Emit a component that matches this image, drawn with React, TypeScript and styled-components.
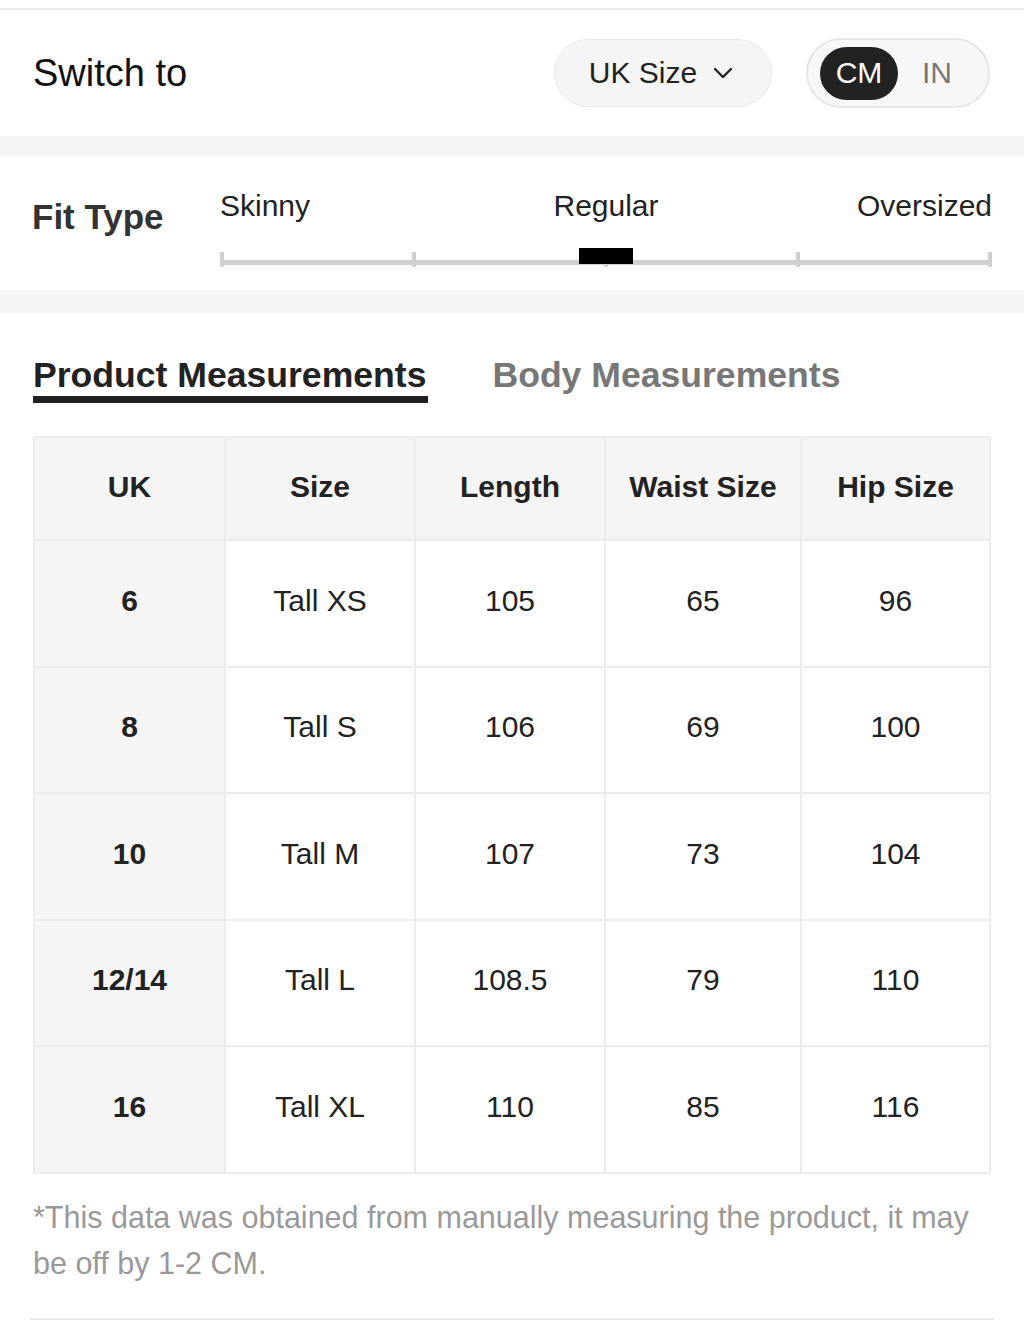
import React from "react";
import styled, { createGlobalStyle } from "styled-components";

const GlobalStyle = createGlobalStyle`
  html, body { margin: 0; padding: 0; background: #ffffff; }
  body {
    font-family: "Liberation Sans", Arial, Helvetica, sans-serif;
    color: #222;
    -webkit-font-smoothing: antialiased;
  }
  * { box-sizing: border-box; }
`;

const Page = styled.div`
  width: 1024px;
  padding-top: 8px;
`;

const TopRule = styled.div`
  height: 2px;
  background: #ececec;
`;

const SwitchRow = styled.div`
  height: 126px;
  display: flex;
  align-items: center;
  justify-content: space-between;
  padding: 0 34px 0 33px;
`;

const SwitchTitle = styled.div`
  font-size: 38px;
  color: #111;
`;

const Controls = styled.div`
  display: flex;
  align-items: center;
  gap: 34px;
`;

const SelectPill = styled.div`
  width: 218px;
  height: 68px;
  border-radius: 34px;
  background: #f5f5f5;
  border: 1px solid #e9e9e9;
  display: flex;
  align-items: center;
  justify-content: center;
  gap: 16px;
  font-size: 30px;
  color: #222;
  padding-right: 4px;
`;

const UnitToggle = styled.div`
  width: 184px;
  height: 70px;
  border-radius: 35px;
  background: #f7f7f7;
  border: 2px solid #e6e6e6;
  display: flex;
  align-items: center;
  padding: 0 12px;
`;

const UnitOption = styled.div<{ $active?: boolean }>`
  height: 53px;
  width: ${(p) => (p.$active ? "78px" : "auto")};
  border-radius: 27px;
  display: flex;
  align-items: center;
  justify-content: center;
  font-size: 30px;
  background: ${(p) => (p.$active ? "#222" : "transparent")};
  color: ${(p) => (p.$active ? "#fff" : "#777")};
  margin-left: ${(p) => (p.$active ? "0" : "24px")};
`;

const Band = styled.div<{ $h: number }>`
  height: ${(p) => p.$h}px;
  background: #f5f5f5;
`;

const FitSection = styled.div`
  height: 133px;
  display: flex;
  align-items: flex-start;
  padding: 31px 32px 0 32px;
`;

const FitLabel = styled.div`
  width: 188px;
  flex-shrink: 0;
  margin-top: 9px;
  line-height: 40px;
  font-size: 35px;
  font-weight: 700;
  color: #333;
`;

const Slider = styled.div`
  flex: 1;
  display: flex;
  flex-direction: column;
`;

const SliderLabels = styled.div`
  display: grid;
  grid-template-columns: 1fr auto 1fr;
  line-height: 36px;
  font-size: 30px;
  color: #222;
`;

const SliderLabel = styled.span<{ $align: "left" | "center" | "right" }>`
  text-align: ${(p) => p.$align};
`;

const Track = styled.div`
  position: relative;
  margin-top: 28px;
  height: 15px;
  display: flex;
  justify-content: space-between;
  &::before {
    content: "";
    position: absolute;
    left: 0;
    right: 0;
    top: 8px;
    height: 5px;
    background: #d0d0d0;
  }
`;

const Tick = styled.div`
  width: 4px;
  height: 15px;
  background: #d0d0d0;
`;

const Thumb = styled.div`
  position: absolute;
  left: 50%;
  top: -4px;
  width: 54px;
  height: 16px;
  transform: translateX(-50%);
  background: #000;
`;

const MeasureSection = styled.div`
  padding: 0 34px 0 33px;
`;

const TabRow = styled.div`
  margin-top: 42px;
  display: flex;
  gap: 64px;
`;

const Tab = styled.div<{ $active?: boolean }>`
  font-size: 35.6px;
  font-weight: 700;
  line-height: 41px;
  color: ${(p) => (p.$active ? "#222" : "#777")};
  border-bottom: 7px solid ${(p) => (p.$active ? "#222" : "transparent")};
  padding-right: ${(p) => (p.$active ? "2px" : "0")};
`;

const Table = styled.table`
  margin-top: 33px;
  width: 956px;
  border-collapse: collapse;
  table-layout: fixed;
`;

const HeadCell = styled.th`
  height: 103px;
  background: #f5f5f5;
  border: 2px solid #ececec;
  font-size: 30px;
  font-weight: 700;
  color: #222;
  text-align: center;
  padding: 0 0 4px;
`;

const Cell = styled.td<{ $key?: boolean }>`
  height: 126.5px;
  border: 2px solid #ececec;
  background: ${(p) => (p.$key ? "#f5f5f5" : "#fff")};
  font-size: 30px;
  font-weight: ${(p) => (p.$key ? 700 : 400)};
  color: #222;
  text-align: center;
  padding: 0 0 5px;
`;

const Footnote = styled.p`
  margin: 20px 0 0;
  font-size: 30.5px;
  line-height: 46px;
  color: #999;
`;

const BottomRule = styled.div`
  margin: 32px 30px 0 30px;
  height: 2px;
  background: #e8e8e8;
`;

const Chevron = () => (
  <svg width="20" height="12" viewBox="0 0 20 12" fill="none">
    <path d="M2 2l8 8 8-8" stroke="#222" strokeWidth="2.4" strokeLinecap="round" strokeLinejoin="round" />
  </svg>
);

const rows = [
  ["6", "Tall XS", "105", "65", "96"],
  ["8", "Tall S", "106", "69", "100"],
  ["10", "Tall M", "107", "73", "104"],
  ["12/14", "Tall L", "108.5", "79", "110"],
  ["16", "Tall XL", "110", "85", "116"],
];

const colWidths = [191, 190, 190, 196, 189];

export default function App() {
  return (
    <Page>
      <GlobalStyle />
      <TopRule />
      <SwitchRow>
        <SwitchTitle>Switch to</SwitchTitle>
        <Controls>
          <SelectPill>
            <span>UK Size</span>
            <Chevron />
          </SelectPill>
          <UnitToggle>
            <UnitOption $active>CM</UnitOption>
            <UnitOption>IN</UnitOption>
          </UnitToggle>
        </Controls>
      </SwitchRow>
      <Band $h={21} />
      <FitSection>
        <FitLabel>Fit Type</FitLabel>
        <Slider>
          <SliderLabels>
            <SliderLabel $align="left">Skinny</SliderLabel>
            <SliderLabel $align="center">Regular</SliderLabel>
            <SliderLabel $align="right">Oversized</SliderLabel>
          </SliderLabels>
          <Track>
            <Tick />
            <Tick />
            <Tick />
            <Tick />
            <Tick />
            <Thumb />
          </Track>
        </Slider>
      </FitSection>
      <Band $h={23} />
      <MeasureSection>
        <TabRow>
          <Tab $active>Product Measurements</Tab>
          <Tab>Body Measurements</Tab>
        </TabRow>
        <Table>
          <colgroup>
            {colWidths.map((w, i) => (
              <col key={i} style={{ width: w }} />
            ))}
          </colgroup>
          <thead>
            <tr>
              <HeadCell>UK</HeadCell>
              <HeadCell>Size</HeadCell>
              <HeadCell>Length</HeadCell>
              <HeadCell>Waist Size</HeadCell>
              <HeadCell>Hip Size</HeadCell>
            </tr>
          </thead>
          <tbody>
            {rows.map((r) => (
              <tr key={r[0]}>
                {r.map((v, i) => (
                  <Cell key={i} $key={i === 0}>
                    {v}
                  </Cell>
                ))}
              </tr>
            ))}
          </tbody>
        </Table>
        <Footnote>
          *This data was obtained from manually measuring the product, it may be off by 1-2 CM.
        </Footnote>
      </MeasureSection>
      <BottomRule />
    </Page>
  );
}
